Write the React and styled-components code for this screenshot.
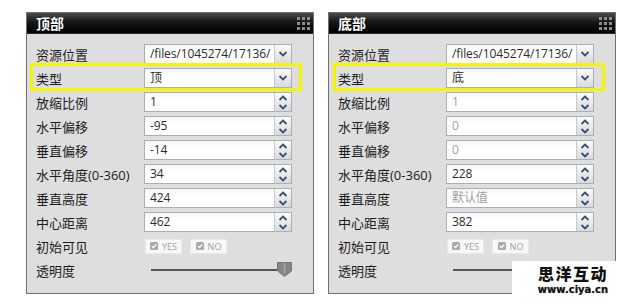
import React from 'react';
import styled, { createGlobalStyle } from 'styled-components';

const GlobalStyle = createGlobalStyle`
  html, body {
    margin: 0;
    padding: 0;
    background: #ffffff;
  }
  body {
    font-family: "Open Sans", "Noto Sans CJK SC", sans-serif;
  }
`;

const Page = styled.div`
  position: relative;
  width: 640px;
  height: 304px;
  box-sizing: border-box;
  padding: 12px 0 0 26px;
  display: flex;
  gap: 14px;
  overflow: hidden;
`;

const Panel_Container = styled.div`
  position: relative;
  width: 288px;
  height: 282px;
  box-sizing: border-box;
  border: 1px solid #707070;
  background: #dedede;
  display: flex;
  flex-direction: column;
`;

const Header = styled.div`
  height: 20px;
  display: flex;
  align-items: center;
  justify-content: space-between;
  padding: 0 3px 0 9px;
  background: linear-gradient(#4b4b4b 0%, #161616 45%, #000000 100%);
  border-bottom: 1px solid #2a2a2a;
`;

const Title = styled.div`
  color: #ffffff;
  font-family: "Noto Sans CJK SC", sans-serif;
  font-weight: bold;
  font-size: 14px;
  line-height: 20px;
  text-shadow: 1px 1px 0 #000;
`;

const Grip = styled.div`
  display: grid;
  grid-template-columns: repeat(3, 3px);
  grid-auto-rows: 3px;
  gap: 2px;
  span {
    background: #8c8c8c;
  }
`;

const Body = styled.div`
  padding: 8px 0 0 9px;
  display: flex;
  flex-direction: column;
`;

const Row = styled.div`
  height: 24px;
  display: flex;
  align-items: center;
`;

const Label = styled.div`
  width: 108px;
  font-size: 13px;
  color: #1c1c1c;
  white-space: nowrap;
`;

const Field = styled.div`
  width: 148px;
  height: 20px;
  box-sizing: border-box;
  border: 1px solid #a7afbb;
  background: linear-gradient(#f3f3f3 0%, #ffffff 30%);
  display: flex;
`;

const Value = styled.div`
  flex: 1;
  min-width: 0;
  white-space: nowrap;
  padding-left: 5px;
  font-size: 12px;
  letter-spacing: -0.1px;
  line-height: 18px;
  color: ${(p) => (p.muted ? '#a0a0a0' : '#2a2a2a')};
`;

const Button = styled.div`
  width: 16px;
  flex: none;
  border-left: 1px solid #c3c8d0;
  background: linear-gradient(#fbfbfb, #dadada);
  display: flex;
  flex-direction: column;
  align-items: center;
  justify-content: ${(p) => (p.single ? 'center' : 'space-around')};
`;

const Toggles = styled.div`
  display: flex;
  gap: 8px;
  margin-left: 1px;
`;

const Toggle = styled.div`
  height: 15px;
  width: 37px;
  box-sizing: border-box;
  background: #f7f7f7;
  border: 1px solid #e9e9e9;
  display: flex;
  align-items: center;
  justify-content: center;
  gap: 4px;
  font-size: 9px;
  color: #a3a3a3;
`;

const Slider = styled.div`
  position: relative;
  width: 141px;
  height: 14px;
  margin-left: 7px;
  display: flex;
  align-items: center;
`;

const Track = styled.div`
  width: 100%;
  height: 2px;
  background: #555555;
`;

const Thumb = styled.svg`
  position: absolute;
  top: -1px;
  transform: translateX(-100%);
`;

const Highlight = styled.div`
  position: absolute;
  top: 50px;
  left: ${(p) => p.left}px;
  width: 272px;
  height: 28px;
  box-sizing: border-box;
  border: 3px solid #f6f500;
`;

const Watermark = styled.div`
  position: absolute;
  left: 512px;
  top: 261px;
  width: 128px;
  height: 43px;
  background: #ffffff;
  display: flex;
  flex-direction: column;
  align-items: center;
  gap: 4px;
  padding-top: 4px;
  box-sizing: border-box;
`;

const WatermarkTitle = styled.div`
  font-family: "Noto Sans CJK SC", sans-serif;
  font-weight: 900;
  font-size: 16px;
  line-height: 16px;
  letter-spacing: 1.5px;
  color: #111111;
  margin-left: -6px;
`;

const WatermarkUrl = styled.div`
  font-family: "DejaVu Sans", sans-serif;
  font-weight: bold;
  font-size: 10px;
  line-height: 10px;
  color: #111111;
  margin-left: -6px;
  text-shadow: 0 0 1px #888;
`;

const Chevron = ({ up }) => (
  <svg width="10" height="6" viewBox="0 0 10 6">
    <polyline
      points={up ? '1.5,5 5,1.5 8.5,5' : '1.5,1 5,4.5 8.5,1'}
      fill="none"
      stroke="#36507a"
      strokeWidth="1.8"
    />
  </svg>
);

const CheckIcon = () => (
  <svg width="8" height="8" viewBox="0 0 8 8">
    <rect x="0" y="0" width="8" height="8" rx="1.5" fill="#a9a9a9" />
    <polyline points="1.8,4 3.4,5.6 6.3,2.5" fill="none" stroke="#ffffff" strokeWidth="1.3" />
  </svg>
);

const SelectField = ({ value }) => (
  <Field>
    <Value>{value}</Value>
    <Button single>
      <Chevron />
    </Button>
  </Field>
);

const SpinField = ({ value, muted }) => (
  <Field>
    <Value muted={muted}>{value}</Value>
    <Button>
      <Chevron up />
      <Chevron />
    </Button>
  </Field>
);

const Panel = ({ title, type, numbers, opacity, highlightLeft }) => (
  <Panel_Container>
    <Header>
      <Title>{title}</Title>
      <Grip>
        {Array.from({ length: 9 }).map((_, i) => <span key={i} />)}
      </Grip>
    </Header>
    <Body>
      <Row>
        <Label>资源位置</Label>
        <SelectField value="/files/1045274/17136/" />
      </Row>
      <Row>
        <Label>类型</Label>
        <SelectField value={type} />
      </Row>
      {numbers.map((n) => (
        <Row key={n.label}>
          <Label>{n.label}</Label>
          <SpinField value={n.value} muted={n.muted} />
        </Row>
      ))}
      <Row>
        <Label>初始可见</Label>
        <Toggles>
          <Toggle><CheckIcon />YES</Toggle>
          <Toggle><CheckIcon />NO</Toggle>
        </Toggles>
      </Row>
      <Row>
        <Label>透明度</Label>
        <Slider>
          <Track />
          <Thumb width="15" height="15" viewBox="0 0 15 15" style={{ left: `${opacity}%` }}>
            <path d="M0.5 0.5 H14.5 V9 L7.5 14.5 L0.5 9 Z" fill="#858585" stroke="#777" />
            <rect x="6.5" y="1" width="2" height="10" fill="#a2a2a2" />
          </Thumb>
        </Slider>
      </Row>
    </Body>
    <Highlight left={highlightLeft} />
  </Panel_Container>
);

const topNumbers = [
  { label: '放缩比例', value: '1' },
  { label: '水平偏移', value: '-95' },
  { label: '垂直偏移', value: '-14' },
  { label: '水平角度(0-360)', value: '34' },
  { label: '垂直高度', value: '424' },
  { label: '中心距离', value: '462' },
];

const bottomNumbers = [
  { label: '放缩比例', value: '1', muted: true },
  { label: '水平偏移', value: '0', muted: true },
  { label: '垂直偏移', value: '0', muted: true },
  { label: '水平角度(0-360)', value: '228' },
  { label: '垂直高度', value: '默认值', muted: true },
  { label: '中心距离', value: '382' },
];

const App = () => (
  <>
    <GlobalStyle />
    <Page>
      <Panel title="顶部" type="顶" numbers={topNumbers} opacity={100} highlightLeft={3} />
      <Panel title="底部" type="底" numbers={bottomNumbers} opacity={100} highlightLeft={4} />
      <Watermark>
        <WatermarkTitle>思洋互动</WatermarkTitle>
        <WatermarkUrl>www.ciya.cn</WatermarkUrl>
      </Watermark>
    </Page>
  </>
);

export default App;
